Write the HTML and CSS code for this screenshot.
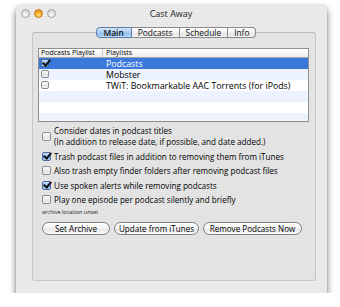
FILE: index.html
```html
<!DOCTYPE html>
<html lang="en">
<head>
    <meta charset="UTF-8">
    <title>Cast Away</title>
    <link rel="stylesheet" href="styles.css">
</head>
<body>
    <div class="window">
        <div class="titlebar">
            <div class="lights">
                <span class="light"></span>
                <span class="light amber"></span>
                <span class="light"></span>
            </div>
            <div class="title">Cast Away</div>
        </div>
        <div class="content">
            <div class="tabs">
                <div class="tab active">Main</div>
                <div class="tab">Podcasts</div>
                <div class="tab">Schedule</div>
                <div class="tab">Info</div>
            </div>
            <div class="group">
                <div class="table">
                    <div class="thead">
                        <div class="col1">Podcasts Playlist</div>
                        <div class="col2">Playlists</div>
                    </div>
                    <div class="row selected">
                        <div class="col1"><span class="check on"></span></div>
                        <div class="col2">Podcasts</div>
                    </div>
                    <div class="row alt">
                        <div class="col1"><span class="check"></span></div>
                        <div class="col2">Mobster</div>
                    </div>
                    <div class="row">
                        <div class="col1"><span class="check"></span></div>
                        <div class="col2">TWiT: Bookmarkable AAC Torrents (for iPods)</div>
                    </div>
                    <div class="row alt"></div>
                    <div class="row"></div>
                    <div class="row alt"></div>
                </div>

                <div class="options">
                    <div class="opt">
                        <span class="check"></span>
                        <span>Consider dates in podcast titles<br>(In addition to release date, if possible, and date added.)</span>
                    </div>
                    <div class="opt">
                        <span class="check on"></span>
                        <span>Trash podcast files in addition to removing them from iTunes</span>
                    </div>
                    <div class="opt">
                        <span class="check"></span>
                        <span>Also trash empty finder folders after removing podcast files</span>
                    </div>
                    <div class="opt">
                        <span class="check on"></span>
                        <span>Use spoken alerts while removing podcasts</span>
                    </div>
                    <div class="opt">
                        <span class="check"></span>
                        <span>Play one episode per podcast silently and briefly</span>
                    </div>
                </div>

                <div class="note">archive location unset</div>

                <div class="buttons">
                    <button class="btn set">Set Archive</button>
                    <button class="btn update">Update from iTunes</button>
                    <button class="btn remove">Remove Podcasts Now</button>
                </div>
            </div>
        </div>
    </div>
</body>
</html>
```

FILE: styles.css
```css
body {
    margin: 0;
    background: #fff;
    font-family: "Open Sans", "DejaVu Sans", sans-serif;
    font-size: 9px;
    color: #000;
}

.window {
    margin: 5px 0 0 16px;
    width: 311px;
    height: 288px;
    border-radius: 5px 5px 0 0;
    background: repeating-linear-gradient(#ececec 0 1px, #e6e6e6 1px 2px);
    box-shadow: 0 4px 7px rgba(0, 0, 0, 0.55), 0 0 1px rgba(0, 0, 0, 0.4);
}

.titlebar {
    height: 17px;
    display: flex;
    align-items: center;
}

.lights {
    display: flex;
    gap: 4px;
    padding-left: 5px;
}

.light {
    width: 9px;
    height: 9px;
    border-radius: 50%;
    box-sizing: border-box;
    border: 1px solid #a4a4a4;
    background: radial-gradient(circle at 50% 70%, #fafafa 0, #dedede 60%, #c4c4c4 100%);
}

.light.amber {
    border-color: #c37a1a;
    background: radial-gradient(circle at 50% 75%, #ffe27a 0, #f6a521 55%, #d17e10 100%);
}

.title {
    flex: 1;
    text-align: center;
    margin-right: 41px;
    font-size: 9px;
    color: #222;
}

.content {
    padding: 5px 11px 0 16px;
}

.tabs {
    display: flex;
    justify-content: center;
    position: relative;
    z-index: 1;
    height: 11px;
    margin-left: 4px;
}

.tab {
    height: 11px;
    line-height: 10px;
    box-sizing: border-box;
    padding: 0 6px;
    border: 1px solid #8a8a8a;
    border-left: none;
    background: linear-gradient(#ffffff, #f1f1f1 50%, #e2e2e2 51%, #f4f4f4);
    font-size: 8.4px;
    color: #111;
}

.tab:first-child {
    border-left: 1px solid #8a8a8a;
    border-radius: 4px 0 0 4px;
}

.tab:last-child {
    border-radius: 0 4px 4px 0;
}

.tab.active {
    background: linear-gradient(#d4e6fa, #a9cbf2 50%, #86b6ed 51%, #bcdcfb);
    border-color: #5d7fa8;
    font-weight: 600;
    padding: 0 7px;
}

.group {
    margin-top: -6px;
    height: 249px;
    box-sizing: border-box;
    border: 1px solid #c6c6c6;
    border-top-color: #b6b6b6;
    border-radius: 3px;
    background: rgba(0, 0, 0, 0.025);
    padding: 15px 6px 0 5px;
}

.table {
    height: 74px;
    box-sizing: border-box;
    border: 1px solid #8f8f8f;
    background: #fff;
    overflow: hidden;
}

.thead {
    display: flex;
    height: 8px;
    line-height: 8px;
    font-size: 7px;
    border-bottom: 1px solid #a5a5a5;
    background: linear-gradient(#ffffff, #ececec);
}

.thead .col1 {
    border-right: 1px solid #c9c9c9;
}

.col1 {
    width: 64px;
    padding-left: 2px;
    box-sizing: border-box;
    flex-shrink: 0;
}

.col2 {
    padding-left: 3px;
    white-space: nowrap;
}

.row {
    display: flex;
    align-items: center;
    height: 11px;
    font-size: 8.8px;
}

.row.alt {
    background: #edf3fe;
}

.row.selected {
    background: #3a78dc;
    color: #fff;
}

.check {
    display: inline-block;
    width: 8px;
    height: 8px;
    box-sizing: border-box;
    border: 1px solid #8c8c8c;
    border-radius: 2px;
    background: linear-gradient(#ffffff, #eaeaea 50%, #dcdcdc 51%, #f6f6f6);
    position: relative;
    flex-shrink: 0;
}

.check.on {
    border-color: #4a6a9a;
    background: linear-gradient(#cfe3fa, #8dbbef 50%, #6aa3e6 51%, #b5d6fa);
}

.check.on::after {
    content: "";
    position: absolute;
    left: 2px;
    top: -2px;
    width: 3px;
    height: 6px;
    border-right: 2px solid #111;
    border-bottom: 2px solid #111;
    transform: rotate(40deg);
}

.options {
    margin: 3px 0 0 4px;
    display: flex;
    flex-direction: column;
    gap: 3.5px;
}

.opt {
    display: flex;
    align-items: center;
    gap: 3px;
    line-height: 11px;
    font-size: 8.1px;
    white-space: nowrap;
}

.opt .check {
    width: 9px;
    height: 9px;
}

.note {
    margin: 4px 0 0 4px;
    font-size: 5.5px;
    line-height: 7px;
    color: #222;
}

.buttons {
    display: flex;
    gap: 4px;
    margin: 6px 0 0 4px;
}

.btn {
    height: 13px;
    box-sizing: border-box;
    border: 1px solid #7d7d7d;
    border-radius: 7px;
    background: linear-gradient(#ffffff, #f3f3f3 50%, #e4e4e4 51%, #fafafa);
    font-family: inherit;
    font-size: 8.1px;
    line-height: 10px;
    padding: 0;
    color: #000;
    text-align: center;
    white-space: nowrap;
}

.btn.set {
    width: 68px;
}

.btn.update {
    width: 85px;
}

.btn.remove {
    width: 99px;
}
```
